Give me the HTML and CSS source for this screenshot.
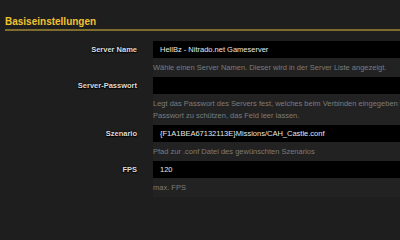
FILE: index.html
```html
<!DOCTYPE html>
<html lang="de">
<head>
<meta charset="utf-8">
<title>Basiseinstellungen</title>
<link rel="stylesheet" href="styles.css">
</head>
<body>
<section class="section">
  <h2 class="section-title">Basiseinstellungen</h2>
  <div class="form">
    <div class="row">
      <label class="label" for="name">Server Name</label>
      <div class="field">
        <input class="input" id="name" type="text" value="HellBz - Nitrado.net Gameserver" readonly>
        <p class="help">Wähle einen Server Namen. Dieser wird in der Server Liste angezeigt.</p>
      </div>
    </div>
    <div class="row">
      <label class="label" for="pw">Server-Passwort</label>
      <div class="field">
        <input class="input" id="pw" type="text" value="" readonly>
        <p class="help">Legt das Passwort des Servers fest, welches beim Verbinden eingegeben werden muss. Um den Server nicht mit einem Passwort zu schützen, das Feld leer lassen.</p>
      </div>
    </div>
    <div class="row">
      <label class="label" for="scn">Szenario</label>
      <div class="field">
        <input class="input" id="scn" type="text" value="{F1A1BEA67132113E}Missions/CAH_Castle.conf" readonly>
        <p class="help">Pfad zur .conf Datei des gewünschten Szenarios</p>
      </div>
    </div>
    <div class="row">
      <label class="label" for="fps">FPS</label>
      <div class="field">
        <input class="input" id="fps" type="text" value="120" readonly>
        <p class="help">max. FPS</p>
      </div>
    </div>
  </div>
</section>
</body>
</html>
```
FILE: styles.css
```css
html, body {
  margin: 0;
  padding: 0;
  overflow: hidden;
  background: #1e1e1e;
}
body {
  font-family: "Liberation Sans", Arial, sans-serif;
  font-size: 7.5px;
  color: #d8d8d8;
}
.section {
  padding-left: 5px;
  width: 800px;
}
.section-title {
  margin: 0;
  padding: 16px 0 1px 0;
  font-size: 10px;
  line-height: 12px;
  font-weight: bold;
  color: #f2c233;
  border-bottom: 2px solid #7d6c2c;
}
.form {
  margin-top: 10px;
}
.row {
  display: grid;
  grid-template-columns: 132px 420px;
  column-gap: 16px;
}
.label {
  height: 17px;
  line-height: 17px;
  text-align: right;
  font-weight: bold;
  color: #dcdcdc;
  text-shadow: 0 0 2px #000, 0 1px 1px #000;
}
.field {
  display: flex;
  flex-direction: column;
}
.input {
  display: block;
  box-sizing: border-box;
  width: 100%;
  height: 17px;
  margin: 0;
  padding: 0 7px;
  border: none;
  outline: none;
  background: #000;
  color: #e8e8e8;
  font-family: inherit;
  font-size: 7.5px;
}
.help {
  margin: 0;
  padding: 3.5px 0 3.5px 0;
  line-height: 12px;
  color: #7c7c7c;
  background: #222222;
}
```
